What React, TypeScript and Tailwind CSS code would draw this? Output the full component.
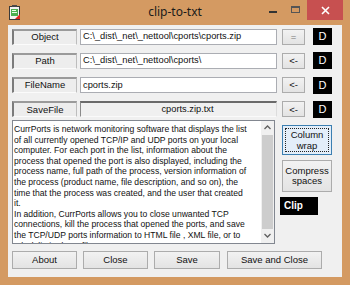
import React from "react";

const btn =
  "flex items-center justify-center border border-[#acacac] bg-linear-to-b from-[#f2f2f2] to-[#e3e3e3] text-[9.5px] text-[#111] leading-none";

function Label({ text }: { text: string }) {
  return (
    <div className="w-[65px] h-[16px] flex items-center justify-center bg-[#ededed] border-l-2 border-t-2 border-r border-b border-l-[#7b7b7b] border-t-[#9a9a9a] border-r-[#bdbdbd] border-b-[#fbfbfb] text-[9.5px] leading-none text-[#111] pb-[1px]">
      {text}
    </div>
  );
}

function DBox() {
  return (
    <div className="ml-[8px] w-[19px] h-[17px] bg-black text-white flex items-center justify-center text-[11px] leading-none">
      D
    </div>
  );
}

const lines = [
  "CurrPorts is network monitoring software that displays the list",
  "of all currently opened TCP/IP and UDP ports on your local",
  "computer. For each port in the list, information about the",
  "process that opened the port is also displayed, including the",
  "process name, full path of the process, version information of",
  "the process (product name, file description, and so on), the",
  "time that the process was created, and the user that created",
  "it.",
  "In addition, CurrPorts allows you to close unwanted TCP",
  "connections, kill the process that opened the ports, and save",
  "the TCP/UDP ports information to HTML file , XML file, or to",
  "tab-delimited text file.",
];

export default function App() {
  return (
    <div className="w-[350px] h-[285px] bg-[#d49a62] flex flex-col font-['Liberation_Sans',Arial,sans-serif] overflow-hidden">
      {/* Title bar */}
      <div className="h-[25px] grid grid-cols-[1fr_auto_1fr] items-start">
        <div className="pl-[9px] pt-[5px]">
          <svg width="12" height="15" viewBox="0 0 12 15">
            <rect x="0.5" y="1.5" width="10" height="13" fill="#f4f4f4" stroke="#3a3a3a" strokeWidth="1" />
            <rect x="2" y="4" width="7" height="7" fill="#4caf50" />
            <rect x="3" y="5" width="4" height="1" fill="#eaffea" />
            <rect x="3" y="7" width="5" height="1" fill="#eaffea" />
            <polygon points="6,14 11,14 11,9" fill="#e0251f" />
            <rect x="3" y="0" width="5" height="2" fill="#4a4a4a" />
          </svg>
        </div>
        <div className="pt-[4px] text-[12px] leading-[16px] text-[#1a1a1a] font-['Noto_Sans',sans-serif]">
          clip-to-txt
        </div>
        <div className="flex justify-end items-start pr-[7px]">
          <div className="w-[20px] h-[20px] flex items-center justify-center">
            <div className="w-[8px] h-[2px] bg-[#333] mt-[3px]" />
          </div>
          <div className="w-[24px] h-[20px] flex items-center justify-center">
            <div className="w-[9px] h-[7px] border border-[#555] border-t-2 -mt-[2px]" />
          </div>
          <div className="w-[36px] h-[20px] bg-[#c75050] flex items-center justify-center">
            <svg width="9" height="9" viewBox="0 0 9 9">
              <path d="M1 1 L8 8 M8 1 L1 8" stroke="#fff" strokeWidth="1.6" />
            </svg>
          </div>
        </div>
      </div>

      {/* Client */}
      <div className="mx-[8px] h-[252px] bg-[#f0f0f0] flex flex-col">
        <div className="pt-[3px] pl-[4px] flex flex-col gap-[7.33px]">
          <div className="flex items-center h-[17px]">
            <Label text="Object" />
            <div className="ml-[3px] w-[197px] h-[16px] bg-white border border-[#abadb3] flex items-center pl-[2px] text-[9.3px] leading-none text-[#111] whitespace-nowrap overflow-hidden">
              C:\_dist\_net\_nettool\cports\cports.zip
            </div>
            <div className={`${btn} ml-[5px] w-[23px] h-[16px] text-[#777]`}>=</div>
            <DBox />
          </div>
          <div className="flex items-center h-[17px]">
            <Label text="Path" />
            <div className="ml-[3px] w-[197px] h-[16px] bg-white border border-[#abadb3] flex items-center pl-[2px] text-[9.3px] leading-none text-[#111] whitespace-nowrap overflow-hidden">
              C:\_dist\_net\_nettool\cports\
            </div>
            <div className={`${btn} ml-[5px] w-[23px] h-[16px]`}>&lt;-</div>
            <DBox />
          </div>
          <div className="flex items-center h-[17px]">
            <Label text="FileName" />
            <div className="ml-[3px] w-[197px] h-[16px] bg-white border border-[#abadb3] flex items-center pl-[2px] text-[9.3px] leading-none text-[#111] whitespace-nowrap overflow-hidden">
              cports.zip
            </div>
            <div className={`${btn} ml-[5px] w-[23px] h-[16px]`}>&lt;-</div>
            <DBox />
          </div>
          <div className="flex items-center h-[17px]">
            <Label text="SaveFile" />
            <div className="ml-[3px] w-[197px] h-[16px] bg-[#f0f0f0] border-t-2 border-l border-r border-b border-t-[#6a6a6a] border-l-[#8a8a8a] border-r-[#dcdcdc] border-b-[#fafafa] flex items-center justify-center pl-[18px] text-[9.3px] leading-none text-[#111] whitespace-nowrap overflow-hidden">
              cports.zip.txt
            </div>
            <div className={`${btn} ml-[5px] w-[23px] h-[16px]`}>&lt;-</div>
            <DBox />
          </div>
        </div>

        {/* Middle */}
        <div className="flex mt-[2px] items-start">
          <div className="ml-[4px] w-[263px] h-[124px] bg-white border border-[#828790] flex overflow-hidden">
            <div className="flex-1 overflow-hidden pl-[1px] pt-[3px] text-[8.6px] leading-[10.6px] text-[#111]">
              {lines.map((l, i) => (
                <div key={i} className="whitespace-nowrap">
                  {l}
                </div>
              ))}
            </div>
            <div className="w-[13px] flex flex-col bg-[#f0f0f0]">
              <div className="h-[14px] flex items-center justify-center">
                <svg width="7" height="5" viewBox="0 0 7 5">
                  <path d="M0.5 4 L3.5 1 L6.5 4" fill="none" stroke="#606060" strokeWidth="1.3" />
                </svg>
              </div>
              <div className="flex-1 mx-[1px] bg-[#cdcdcd]" />
              <div className="h-[14px] flex items-center justify-center">
                <svg width="7" height="5" viewBox="0 0 7 5">
                  <path d="M0.5 1 L3.5 4 L6.5 1" fill="none" stroke="#606060" strokeWidth="1.3" />
                </svg>
              </div>
            </div>
          </div>
          <div className="ml-[7px] flex flex-col">
            <div className="mt-[5px] w-[50px] h-[30px] border border-[#3c7fb1] bg-[#e3eef9] p-[2px]">
              <div className="w-full h-full border border-dotted border-[#222] flex flex-col items-center justify-center text-[9.5px] leading-[11px] text-[#111]">
                <span>Column</span>
                <span>wrap</span>
              </div>
            </div>
            <div className={`${btn} mt-[5px] w-[50px] h-[32px] flex-col leading-[11px]`}>
              <span>Compress</span>
              <span>spaces</span>
            </div>
            <div className="mt-[5px] -ml-[2px] w-[38px] h-[18px] bg-black text-white font-bold text-[10px] leading-none flex items-center pl-[4px]">
              Clip
            </div>
          </div>
        </div>

        {/* Bottom buttons */}
        <div className="flex mt-[7px]">
          <div className={`${btn} ml-[4px] w-[65px] h-[18px]`}>About</div>
          <div className={`${btn} ml-[6px] w-[65px] h-[18px]`}>Close</div>
          <div className={`${btn} ml-[6px] w-[66px] h-[18px]`}>Save</div>
          <div className={`${btn} ml-[7px] w-[95px] h-[18px]`}>Save and Close</div>
        </div>
      </div>
    </div>
  );
}
